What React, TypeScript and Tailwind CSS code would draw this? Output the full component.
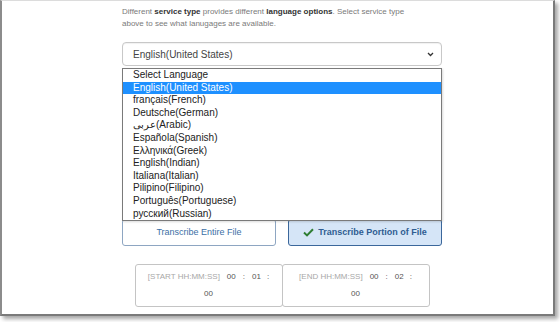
import React from "react";

const langs = [
  "Select Language",
  "English(United States)",
  "français(French)",
  "Deutsche(German)",
  "عربى(Arabic)",
  "Española(Spanish)",
  "Ελληνικά(Greek)",
  "English(Indian)",
  "Italiana(Italian)",
  "Pilipino(Filipino)",
  "Português(Portuguese)",
  "русский(Russian)",
];

function TimeBox({ label, mm }: { label: string; mm: string }) {
  return (
    <div className="w-[148px] h-[43px] border border-[#c4c4c4] rounded-[3px] flex flex-col items-center pt-[6px] text-[8px] leading-[12px]">
      <div className="flex items-center whitespace-nowrap">
        <span className="text-[#a8a8a8]">{label}</span>
        <span className="ml-[7px] text-[#555]">00</span>
        <span className="mx-[7px] text-[#555]">:</span>
        <span className="text-[#555]">{mm}</span>
        <span className="ml-[6px] text-[#555]">:</span>
      </div>
      <div className="mt-[5px] text-[#555]">00</div>
    </div>
  );
}

export default function App() {
  return (
    <div
      className="w-[560px] h-[322px] bg-white"
      style={{ fontFamily: '"Liberation Sans", Arial, sans-serif' }}
    >
      <div className="w-[555px] h-[316px] bg-white border-l-2 border-r-2 border-b-2 border-t border-l-[#8c8c8c] border-r-[#7a7a7a] border-b-[#7a7a7a] border-t-[#dcdcdc] shadow-[3px_3px_4px_rgba(0,0,0,0.35)] pl-[120px] pt-[5px]">
        <div className="w-[320px] relative">
          <p className="text-[8px] leading-[12px] text-[#7a7a7a]">
            Different <b className="text-[#333]">service type</b> provides different{" "}
            <b className="text-[#333]">language options</b>. Select service type
            <br />
            above to see what lanugages are available.
          </p>
          <div className="mt-[12px] h-[24px] border border-[#c8c8c8] rounded-[4px] flex items-center justify-between pl-[10px] pr-[7px] text-[10px] text-[#444] shadow-[inset_0_1px_1px_rgba(0,0,0,0.06)]">
            <span>English(United States)</span>
            <svg width="7" height="5" viewBox="0 0 7 5">
              <path d="M1 1 L3.5 3.5 L6 1" stroke="#333" strokeWidth="1.3" fill="none" />
            </svg>
          </div>

          <div className="mt-[153px] flex gap-[12px]">
            <div className="w-[154px] h-[27px] border border-[#8ea6c2] rounded-[3px] bg-white flex items-center justify-center text-[9px] text-[#3d6fa6]">
              Transcribe Entire File
            </div>
            <div className="w-[154px] h-[27px] border border-[#3b679b] rounded-[3px] bg-[#d5e5f7] flex items-center justify-center text-[9px] font-bold text-[#2f5d92] gap-[4px]">
              <svg width="11" height="9" viewBox="0 0 11 9">
                <path d="M1 4.6 L4 7.4 L10 1.2" stroke="#2e7d32" strokeWidth="2" fill="none" />
              </svg>
              <span>Transcribe Portion of File</span>
            </div>
          </div>

          <div className="mt-[18px] flex justify-center">
            <TimeBox label="[START HH:MM:SS]" mm="01" />
            <div className="-ml-px">
              <TimeBox label="[END HH:MM:SS]" mm="02" />
            </div>
          </div>

          <div className="absolute left-0 top-[62px] w-[320px] bg-white border border-[#7a7a7a] text-[10px] text-[#222] shadow-[1px_1px_2px_rgba(0,0,0,0.15)]">
            {langs.map((l, i) => (
              <div
                key={l}
                className={
                  i === 1
                    ? "h-[12.6px] leading-[12.6px] pl-[10px] bg-[#1e90ff] text-white"
                    : "h-[12.6px] leading-[12.6px] pl-[10px]"
                }
              >
                {l}
              </div>
            ))}
          </div>
        </div>
      </div>
    </div>
  );
}
